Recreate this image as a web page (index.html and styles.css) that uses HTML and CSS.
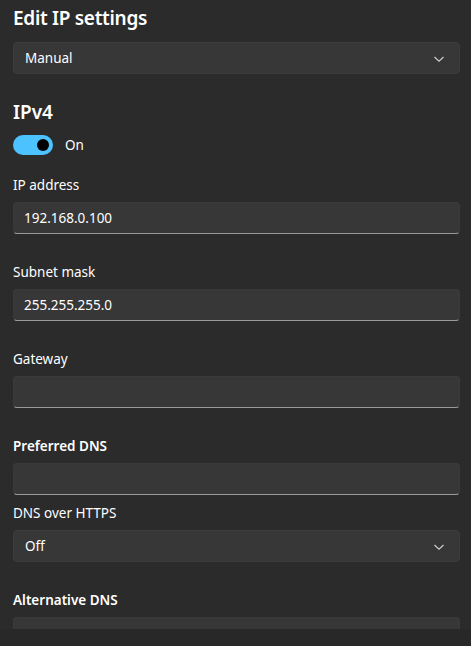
FILE: index.html
```html
<!DOCTYPE html>
<html lang="en">
<head>
<meta charset="utf-8">
<title>Edit IP settings</title>
<link rel="stylesheet" href="styles.css">
</head>
<body>
<div class="page">
  <main class="content">
    <h1 class="title">Edit IP settings</h1>
    <div class="select">
      <span>Manual</span>
      <svg class="chev" width="12" height="8" viewBox="0 0 12 8"><path d="M1.5 2 L6 6.2 L10.5 2" fill="none" stroke="#d0d0d0" stroke-width="1.1"/></svg>
    </div>

    <h2 class="section">IPv4</h2>
    <div class="toggle-row">
      <span class="toggle"><span class="knob"></span></span>
      <span class="toggle-label">On</span>
    </div>

    <div class="field">
      <div class="label">IP address</div>
      <div class="input">192.168.0.100</div>
    </div>
    <div class="field">
      <div class="label">Subnet mask</div>
      <div class="input">255.255.255.0</div>
    </div>
    <div class="field">
      <div class="label">Gateway</div>
      <div class="input"></div>
    </div>
    <div class="field tight">
      <div class="label bold">Preferred DNS</div>
      <div class="input"></div>
    </div>
    <div class="field">
      <div class="label">DNS over HTTPS</div>
      <div class="select">
        <span>Off</span>
        <svg class="chev" width="12" height="8" viewBox="0 0 12 8"><path d="M1.5 2 L6 6.2 L10.5 2" fill="none" stroke="#d0d0d0" stroke-width="1.1"/></svg>
      </div>
    </div>
    <div class="field">
      <div class="label bold">Alternative DNS</div>
      <div class="input"></div>
    </div>
  </main>
  <footer class="footer"></footer>
</div>
</body>
</html>
```
FILE: styles.css
```css
* { box-sizing: border-box; }
html, body {
  margin: 0;
  padding: 0;
  background: #2b2b2b;
}
body {
  font-family: "Noto Sans", "Open Sans", sans-serif;
  color: #ffffff;
  font-size: 14px;
}
.page {
  height: 646px;
  display: flex;
  flex-direction: column;
}
.content {
  flex: 1;
  overflow: hidden;
  padding: 4px 11px 0 13px;
  display: flex;
  flex-direction: column;
}
.footer {
  height: 17px;
  background: #282828;
  flex: none;
}
.title {
  margin: 0 0 10px;
  font-size: 19px;
  font-weight: 600;
  line-height: 28px;
  letter-spacing: -0.3px;
}
.select {
  height: 32px;
  flex: none;
  background: #373737;
  border: 1px solid #3c3c3c;
  border-radius: 4px;
  display: flex;
  align-items: center;
  justify-content: space-between;
  padding: 0 14px 0 11px;
  font-size: 13.5px;
}
.chev { display: block; margin-top: 1px; }
.section {
  margin: 24px 0 0;
  font-size: 19px;
  font-weight: 600;
  line-height: 28px;
}
.toggle-row {
  margin-top: 9px;
  display: flex;
  align-items: center;
  gap: 12px;
  height: 20px;
}
.toggle {
  width: 40px;
  height: 20px;
  border-radius: 10px;
  background: #4cc2ff;
  display: flex;
  align-items: center;
  justify-content: flex-end;
  padding-right: 4px;
}
.knob {
  width: 12px;
  height: 12px;
  border-radius: 50%;
  background: #000;
}
.toggle-label { font-size: 13.5px; }
.field {
  margin-top: 20px;
  display: flex;
  flex-direction: column;
  flex: none;
}
.field + .field { margin-top: 28px; }
.field.tight + .field { margin-top: 8px; }
.label {
  line-height: 20px;
  margin-bottom: 7px;
  font-size: 13.5px;
}
.label.bold { font-weight: 600; }
.input {
  height: 32px;
  background: #373737;
  border: 1px solid #3a3a3a;
  border-bottom: 1px solid #9a9a9a;
  border-radius: 4px;
  display: flex;
  align-items: center;
  padding: 0 11px 0 10px;
  font-size: 13.5px;
}
```
